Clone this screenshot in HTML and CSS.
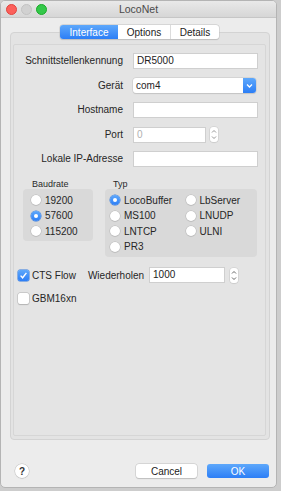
FILE: index.html
```html
<!DOCTYPE html>
<html lang="de">
<head>
<meta charset="utf-8">
<title>LocoNet</title>
<link rel="stylesheet" href="styles.css">
</head>
<body>
<div class="window">
  <div class="titlebar">
    <div class="lights">
      <span class="light red"></span>
      <span class="light gray"></span>
      <span class="light green"></span>
    </div>
    <div class="title">LocoNet</div>
  </div>
  <div class="body">
    <div class="segmented">
      <span class="seg active">Interface</span>
      <span class="seg">Options</span>
      <span class="seg last">Details</span>
    </div>
    <div class="tabview">
      <div class="pane">
        <div class="form">
          <label class="lbl">Schnittstellenkennung</label>
          <div class="field"><span class="input wide">DR5000</span></div>

          <label class="lbl">Gerät</label>
          <div class="field">
            <span class="combo"><span class="combo-text">com4</span><span class="combo-btn"><svg width="13" height="15" viewBox="0 0 13 15"><path d="M4 6.5 L6.5 9 L9 6.5" fill="none" stroke="#fff" stroke-width="1.3"/></svg></span></span>
          </div>

          <label class="lbl">Hostname</label>
          <div class="field"><span class="input wide"></span></div>

          <label class="lbl">Port</label>
          <div class="field">
            <span class="input port placeholder">0</span>
            <span class="stepper"><svg width="8" height="15" viewBox="0 0 8 15"><path d="M2 5.5 L4 3.5 L6 5.5 M2 9.5 L4 11.5 L6 9.5" fill="none" stroke="#8a8a8a" stroke-width="0.9"/></svg></span>
          </div>

          <label class="lbl">Lokale IP-Adresse</label>
          <div class="field"><span class="input wide"></span></div>
        </div>

        <div class="groups">
          <div class="group baud">
            <div class="group-label">Baudrate</div>
            <div class="group-box">
              <div class="radio"><span class="dot"></span>19200</div>
              <div class="radio"><span class="dot on"></span>57600</div>
              <div class="radio"><span class="dot"></span>115200</div>
            </div>
          </div>
          <div class="group typ">
            <div class="group-label">Typ</div>
            <div class="group-box grid">
              <div class="radio"><span class="dot on"></span>LocoBuffer</div>
              <div class="radio"><span class="dot"></span>LbServer</div>
              <div class="radio"><span class="dot"></span>MS100</div>
              <div class="radio"><span class="dot"></span>LNUDP</div>
              <div class="radio"><span class="dot"></span>LNTCP</div>
              <div class="radio"><span class="dot"></span>ULNI</div>
              <div class="radio"><span class="dot"></span>PR3</div>
            </div>
          </div>
        </div>

        <div class="cts-row">
          <span class="check on"><svg width="11" height="11" viewBox="0 0 11 11"><path d="M2.6 5.6 L4.6 7.8 L8.4 2.9" fill="none" stroke="#fff" stroke-width="1.4"/></svg></span>
          <span class="check-text">CTS Flow</span>
          <span class="rep-label">Wiederholen</span>
          <span class="input rep">1000</span>
          <span class="stepper"><svg width="8" height="15" viewBox="0 0 8 15"><path d="M2 5.5 L4 3.5 L6 5.5 M2 9.5 L4 11.5 L6 9.5" fill="none" stroke="#555" stroke-width="0.9"/></svg></span>
        </div>
        <div class="gbm-row">
          <span class="check"></span>
          <span class="check-text">GBM16xn</span>
        </div>
      </div>
    </div>
    <div class="footer">
      <span class="help">?</span>
      <span class="btn cancel">Cancel</span>
      <span class="btn ok">OK</span>
    </div>
  </div>
</div>
</body>
</html>
```
FILE: styles.css
```css
* { box-sizing: border-box; }
html, body { margin: 0; padding: 0; }
body {
  width: 281px;
  height: 491px;
  background: #cdcdcd;
  font-family: "Liberation Sans", Arial, sans-serif;
  font-size: 10px;
  color: #262626;
  overflow: hidden;
}
.window {
  width: 277px;
  height: 488px;
  background: #ececec;
  border: 1px solid #b4b4b4;
  border-radius: 5px;
  overflow: hidden;
  display: flex;
  flex-direction: column;
}
.titlebar {
  height: 17px;
  flex: none;
  display: grid;
  align-items: center;
  background: linear-gradient(#e9e9e9, #d6d6d6);
  border-bottom: 1px solid #c6c6c6;
}
.lights, .title { grid-area: 1 / 1; }
.lights {
  display: flex;
  gap: 4px;
  padding-left: 5px;
  justify-self: start;
}
.light {
  width: 11px;
  height: 11px;
  border-radius: 50%;
}
.light.red { background: #fc605b; border: 1px solid #e0443e; }
.light.gray { background: #d1d1d1; border: 1px solid #c2c2c2; }
.light.green { background: #34c84a; border: 1px solid #1aab29; }
.title {
  justify-self: center;
  font-size: 10.5px;
  color: #4a4a4a;
}
.body {
  flex: 1;
  display: flex;
  flex-direction: column;
  padding: 7px 6px 0 9px;
}
.segmented {
  align-self: flex-start;
  margin-left: 50px;
  margin-bottom: -7px;
  height: 14px;
  display: flex;
  background: #fff;
  border-radius: 3px;
  box-shadow: 0 0 0 0.5px #c4c4c4, 0 0.5px 1px rgba(0,0,0,0.18);
  position: relative;
  z-index: 1;
}
.seg {
  display: flex;
  align-items: center;
  justify-content: center;
  width: 53px;
  font-size: 10px;
  color: #222;
  border-right: 1px solid #dcdcdc;
}
.seg.active {
  width: 58px;
  background: linear-gradient(#5ea8fb, #2c7ef6);
  color: #fff;
  border-radius: 3px 0 0 3px;
  border-right: none;
}
.seg.last { width: 48px; border-right: none; }
.tabview {
  width: 260px;
  height: 408px;
  flex: none;
  background: #e3e3e3;
  border: 1px solid #d3d3d3;
  border-radius: 4px;
  padding: 11px 3px 3px 2px;
  display: flex;
}
.pane {
  flex: 1;
  background: #e4e4e4;
  border: 1px solid #d6d6d6;
  border-radius: 2px;
  padding-top: 8px;
  display: flex;
  flex-direction: column;
}
.form {
  display: grid;
  grid-template-columns: 109px 125px;
  column-gap: 10px;
  row-gap: 8.5px;
}
.lbl {
  text-align: right;
  line-height: 16px;
  white-space: nowrap;
}
.field {
  display: flex;
  align-items: center;
  gap: 4px;
  height: 16px;
}
.input {
  display: block;
  height: 16px;
  background: #fff;
  border: 1px solid #cfcfcf;
  line-height: 14px;
  padding-left: 3px;
  color: #222;
}
.input.wide { width: 125px; }
.input.port { width: 73px; }
.placeholder { color: #b0b0b0; }
.combo {
  display: flex;
  width: 123px;
  height: 15px;
  background: #fff;
  border-radius: 3px;
  box-shadow: 0 0 0 0.5px #c8c8c8, 0 0.5px 1px rgba(0,0,0,0.15);
}
.combo-text {
  flex: 1;
  line-height: 15px;
  padding-left: 3px;
}
.combo-btn {
  width: 13px;
  background: linear-gradient(#5ea8fb, #2c7ef6);
  border-radius: 0 3px 3px 0;
  display: flex;
}
.stepper {
  width: 8px;
  height: 15px;
  background: #fff;
  border-radius: 3px;
  box-shadow: 0 0 0 0.5px #cacaca, 0 0.5px 1px rgba(0,0,0,0.15);
  display: flex;
}
.groups {
  display: flex;
  gap: 12px;
  margin-top: 12px;
  margin-left: 9px;
}
.group-label {
  font-size: 9px;
  line-height: 10px;
  padding-left: 9px;
  color: #2a2a2a;
}
.baud .group-label { padding-left: 9px; }
.typ .group-label { padding-left: 8px; }
.group-box {
  background: #d9d9d9;
  border-radius: 4px;
  display: flex;
  flex-direction: column;
  gap: 3.5px;
  padding: 5px 4px 4px 8px;
}
.baud .group-box { width: 70px; }
.typ .group-box { width: 152px; padding: 5px 4px 4.5px 5px; }
.group-box.grid {
  display: grid;
  grid-template-columns: 72px auto;
  row-gap: 3.5px;
}
.radio {
  display: flex;
  align-items: center;
  gap: 4px;
  height: 12px;
  font-size: 10px;
  color: #262626;
}
.dot {
  width: 10px;
  height: 10px;
  border-radius: 50%;
  background: #fff;
  box-shadow: 0 0 0 0.5px #b9b9b9, 0 0.5px 1px rgba(0,0,0,0.2);
  display: flex;
  align-items: center;
  justify-content: center;
  flex: none;
}
.dot.on {
  background: linear-gradient(#5ea8fb, #2c7ef6);
  box-shadow: 0 0 0 0.5px #2f79e0;
}
.dot.on::after {
  content: "";
  width: 4px;
  height: 4px;
  border-radius: 50%;
  background: #fff;
}
.cts-row {
  display: flex;
  align-items: center;
  height: 16px;
  margin-top: 10px;
  margin-left: 4px;
}
.check {
  width: 11px;
  height: 11px;
  border-radius: 2px;
  background: #fff;
  box-shadow: 0 0 0 0.5px #b5b5b5, 0 0.5px 1px rgba(0,0,0,0.2);
  display: flex;
  flex: none;
}
.check.on {
  background: linear-gradient(#5ea8fb, #2c7ef6);
  box-shadow: 0 0 0 0.5px #2f79e0;
}
.check-text { margin-left: 3px; }
.rep-label { margin-left: 12px; }
.input.rep { width: 76px; margin-left: 5px; }
.cts-row .stepper { margin-left: 5px; }
.gbm-row {
  display: flex;
  align-items: center;
  height: 12px;
  margin-top: 9px;
  margin-left: 4px;
}
.footer {
  display: flex;
  align-items: center;
  margin-top: 24px;
  height: 14px;
  padding-left: 5px;
}
.help {
  width: 14px;
  height: 14px;
  border-radius: 50%;
  background: #fff;
  box-shadow: 0 0 0 0.5px #c2c2c2, 0 0.5px 1px rgba(0,0,0,0.2);
  display: flex;
  align-items: center;
  justify-content: center;
  font-weight: bold;
  font-size: 10px;
  color: #333;
}
.btn {
  height: 14px;
  display: flex;
  align-items: center;
  justify-content: center;
  border-radius: 3px;
  font-size: 10px;
}
.cancel {
  width: 61px;
  margin-left: auto;
  background: #fff;
  box-shadow: 0 0 0 0.5px #c4c4c4, 0 0.5px 1px rgba(0,0,0,0.2);
  color: #222;
}
.ok {
  width: 62px;
  margin-left: 10px;
  margin-right: 1px;
  background: linear-gradient(#5ea8fb, #2c7ef6);
  color: #fff;
}
```
